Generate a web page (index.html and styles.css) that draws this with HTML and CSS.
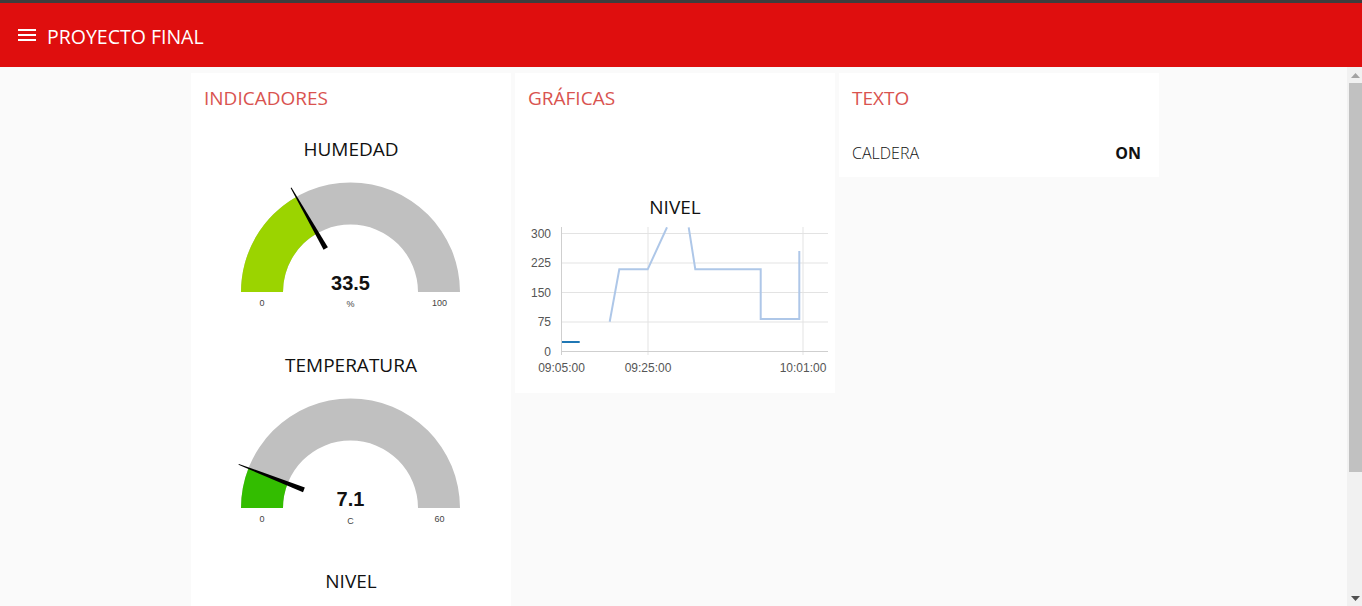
FILE: index.html
```html
<!DOCTYPE html>
<html lang="es">
<head>
<meta charset="utf-8">
<title>PROYECTO FINAL</title>
<link rel="stylesheet" href="styles.css">
</head>
<body>
<div class="topline"></div>
<header class="toolbar">
  <svg class="menu-icon" viewBox="0 0 24 24"><path d="M3 18h18v-2H3v2zm0-5h18v-2H3v2zm0-7v2h18V6H3z"/></svg>
  <h1 class="app-title">PROYECTO FINAL</h1>
</header>
<div class="viewport">
<main class="content">
  <div class="columns">
    <section class="card">
      <h2 class="card-title">INDICADORES</h2>
      <div class="gauge">
        <p class="widget-title">HUMEDAD</p>
        <svg class="gauge-svg" width="320" height="176" viewBox="0 -3 320 176">
          <path class="g-bg" d="M50 120 A109.5 109.5 0 0 1 269 120 L227 120 A67.5 67.5 0 0 0 92 120 Z"/>
          <path class="g-hum" d="M50 120 A109.5 109.5 0 0 1 105.24 24.89 L126.05 61.37 A67.5 67.5 0 0 0 92 120 Z"/>
          <polygon class="g-needle" points="136.89,75.33 100.47,15.52 99.61,16.02 132.55,77.81"/>
          <text class="g-value" x="159.5" y="118">33.5</text>
          <text class="g-unit" x="159.5" y="135">%</text>
          <text class="g-minmax" x="71" y="134">0</text>
          <text class="g-minmax" x="248.5" y="134">100</text>
        </svg>
      </div>
      <div class="gauge">
        <p class="widget-title">TEMPERATURA</p>
        <svg class="gauge-svg" width="320" height="176" viewBox="0 -3 320 176">
          <path class="g-bg" d="M50 120 A109.5 109.5 0 0 1 269 120 L227 120 A67.5 67.5 0 0 0 92 120 Z"/>
          <path class="g-temp" d="M50 120 A109.5 109.5 0 0 1 57.48 80.22 L96.61 95.48 A67.5 67.5 0 0 0 92 120 Z"/>
          <polygon class="g-needle" points="113.82,99.5 47.88,75.93 47.52,76.87 112.0,104.16"/>
          <text class="g-value" x="159.5" y="118">7.1</text>
          <text class="g-unit" x="159.5" y="136">C</text>
          <text class="g-minmax" x="71" y="133.7">0</text>
          <text class="g-minmax" x="248.5" y="133.7">60</text>
        </svg>
      </div>
      <div class="gauge gauge-last">
        <p class="widget-title">NIVEL</p>
        <svg class="gauge-svg" width="320" height="163" viewBox="0 -3 320 163">
          <path class="g-bg" d="M50 120 A109.5 109.5 0 0 1 269 120 L227 120 A67.5 67.5 0 0 0 92 120 Z"/>
        </svg>
      </div>
    </section>

    <section class="card">
      <h2 class="card-title">GRÁFICAS</h2>
      <div class="chart-spacer"></div>
      <div class="chart">
        <p class="widget-title">NIVEL</p>
        <svg class="chart-svg" width="320" height="166" viewBox="0 1 320 166">
          <g class="grid">
            <line x1="46.5" y1="7.5" x2="313" y2="7.5"/>
            <line x1="46.5" y1="37" x2="313" y2="37"/>
            <line x1="46.5" y1="66.5" x2="313" y2="66.5"/>
            <line x1="46.5" y1="96" x2="313" y2="96"/>
            <line x1="133" y1="0.7" x2="133" y2="129"/>
            <line x1="288" y1="0.7" x2="288" y2="129"/>
          </g>
          <g class="axis">
            <line x1="46.5" y1="0.7" x2="46.5" y2="129"/>
            <line x1="46.5" y1="125.5" x2="313" y2="125.5"/>
          </g>
          <g class="y-labels">
            <text x="36" y="7.5">300</text>
            <text x="36" y="37">225</text>
            <text x="36" y="66.5">150</text>
            <text x="36" y="96">75</text>
            <text x="36" y="125.5">0</text>
          </g>
          <g class="x-labels">
            <text x="46.5" y="142">09:05:00</text>
            <text x="133" y="142">09:25:00</text>
            <text x="288" y="142">10:01:00</text>
          </g>
          <polyline class="line-light" points="94.7,95.7 104.3,43.3 132.7,43.3 152,1.3"/>
          <polyline class="line-light" points="173.7,1.3 180.3,43.3 245.7,43.3 245.7,93 284.3,93 284.3,25"/>
          <line class="line-dark" x1="47" y1="116" x2="64.7" y2="116"/>
        </svg>
      </div>
    </section>

    <section class="card">
      <h2 class="card-title">TEXTO</h2>
      <div class="text-row">
        <span class="text-label">CALDERA</span>
        <span class="text-value">ON</span>
      </div>
    </section>
  </div>
</main>
<div class="scrollbar">
  <div class="sb-btn">
    <svg width="9" height="5" viewBox="0 0 9 5"><polygon points="4.5,0 9,5 0,5" fill="#a3a3a3"/></svg>
  </div>
  <div class="sb-track">
    <div class="sb-thumb"></div>
  </div>
  <div class="sb-btn">
    <svg width="9" height="5" viewBox="0 0 9 5"><polygon points="0,0 9,0 4.5,5" fill="#505050"/></svg>
  </div>
</div>
</div>
</body>
</html>
```

FILE: styles.css
```css
* {
  box-sizing: border-box;
}

html,
body {
  margin: 0;
  padding: 0;
}

body {
  height: 606px;
  display: flex;
  flex-direction: column;
  overflow: hidden;
  background: #fafafa;
  font-family: "Open Sans", "Noto Sans", sans-serif;
  color: #111;
}

.topline {
  flex: none;
  height: 3px;
  background: #3d3d3d;
}

.toolbar {
  flex: none;
  height: 64px;
  display: flex;
  align-items: center;
  padding-left: 15px;
  background: #df0e0e;
  color: #fff;
}

.menu-icon {
  width: 24px;
  height: 24px;
  fill: #fff;
  margin-right: 8px;
}

.app-title {
  margin: 0;
  padding-top: 2px;
  font-size: 19.5px;
  font-weight: 400;
}

.viewport {
  flex: 1;
  min-height: 0;
  display: flex;
}

.content {
  flex: 1;
  min-width: 0;
  overflow: hidden;
  background: #fafafa;
}

.scrollbar {
  flex: none;
  width: 15px;
  display: flex;
  flex-direction: column;
  background: #f1f1f1;
}

.sb-btn {
  flex: none;
  height: 16px;
  display: flex;
  align-items: center;
  justify-content: center;
  padding-left: 2px;
}

.sb-btn svg {
  display: block;
}

.sb-track {
  flex: 1;
  padding-left: 2px;
}

.sb-thumb {
  height: 389px;
  background: #c1c1c1;
}

.columns {
  display: flex;
  justify-content: center;
  align-items: flex-start;
  gap: 4px;
  padding: 6px 0 6px 3px;
}

.card {
  flex: none;
  width: 320px;
  background: #fff;
}

.card-title {
  margin: 0;
  height: 56px;
  padding: 13px 13px 0;
  font-size: 19px;
  line-height: 24px;
  font-weight: 400;
  color: #d9534f;
}

.widget-title {
  margin: 0;
  height: 40px;
  padding-bottom: 1px;
  display: flex;
  align-items: center;
  justify-content: center;
  font-size: 19px;
  font-weight: 400;
  color: #111;
}

.gauge {
  height: 216px;
}

.gauge-last {
  height: 203px;
}

.gauge-svg,
.chart-svg {
  display: block;
}

.g-bg {
  fill: #c0c0c0;
}

.g-hum {
  fill: #9bd400;
}

.g-temp {
  fill: #33bd00;
}

.g-needle {
  fill: #000;
}

.g-value {
  font-family: "Liberation Sans", Arial, sans-serif;
  font-weight: 700;
  font-size: 20px;
  fill: #111;
  text-anchor: middle;
}

.g-unit,
.g-minmax {
  font-family: "Liberation Sans", Arial, sans-serif;
  font-size: 9px;
  fill: #444;
  text-anchor: middle;
}

.chart-spacer {
  height: 58px;
}

.grid line {
  stroke: #e3e3e3;
  stroke-width: 1;
}

.axis line {
  stroke: #cfcfcf;
  stroke-width: 1;
}

.y-labels text,
.x-labels text {
  font-family: "Liberation Sans", Arial, sans-serif;
  font-size: 12px;
  fill: #555;
  dominant-baseline: central;
}

.y-labels text {
  text-anchor: end;
}

.x-labels text {
  text-anchor: middle;
}

.line-light {
  fill: none;
  stroke: #aec7e8;
  stroke-width: 2;
}

.line-dark {
  stroke: #1f77b4;
  stroke-width: 2;
}

.text-row {
  height: 48px;
  display: flex;
  align-items: center;
  justify-content: space-between;
  padding: 0 18px 0 13px;
  font-size: 16px;
  color: #111;
}

.text-label {
  font-weight: 300;
}

.text-value {
  font-weight: 700;
}
```
